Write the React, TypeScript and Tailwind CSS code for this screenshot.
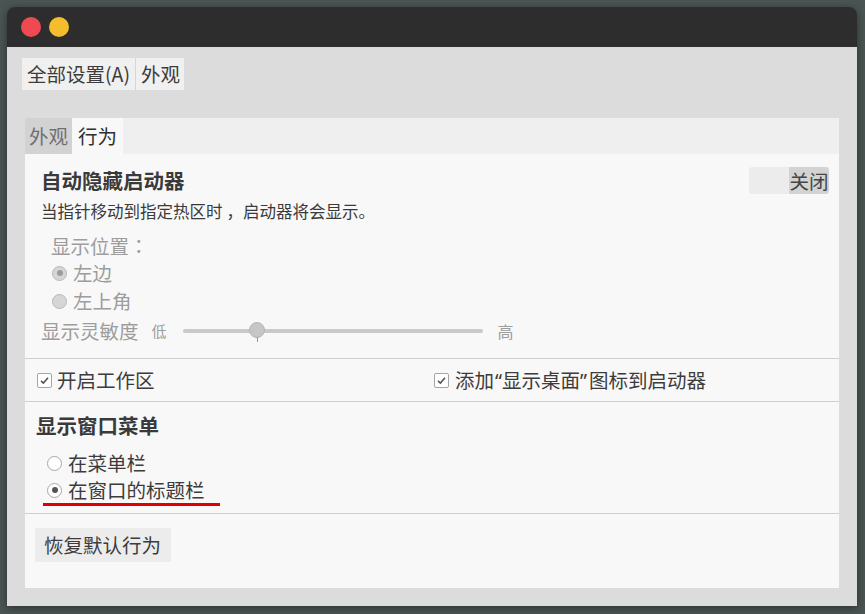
import React from "react";

const font = { fontFamily: '"Noto Sans CJK SC", "Noto Sans", sans-serif' };
const tcPunct = { fontFamily: '"Noto Sans CJK TC", sans-serif' };
const latin = { fontFamily: '"Noto Sans", sans-serif' };

function Radio({ checked, disabled }: { checked?: boolean; disabled?: boolean }) {
  return (
    <span
      className={
        "flex h-[15px] w-[15px] shrink-0 items-center justify-center rounded-full border " +
        (disabled ? "border-[#b9b9b9] bg-[#d6d6d6]" : "border-[#a8a8a8] bg-white")
      }
    >
      {checked && (
        <span
          className={
            "h-[6px] w-[6px] rounded-full " + (disabled ? "bg-[#9d9d9d]" : "bg-[#555555]")
          }
        />
      )}
    </span>
  );
}

function Checkbox() {
  return (
    <span className="flex h-[15px] w-[15px] shrink-0 items-center justify-center rounded-[2px] border border-[#a5a5a5] bg-white">
      <svg width="11" height="11" viewBox="0 0 11 11">
        <path d="M2 5.8 L4.4 8 L9 2.8" fill="none" stroke="#555" strokeWidth="1.6" />
      </svg>
    </span>
  );
}

export default function App() {
  return (
    <div
      className="flex h-[614px] w-[865px] bg-[#4a5452] pb-[8px] pl-[7px] pr-[8px] pt-[7px] text-[19.5px] text-[#3c3c3c]"
      style={font}
    >
      <div className="flex flex-1 flex-col overflow-hidden rounded-t-[8px] shadow-[0_2px_8px_rgba(0,0,0,0.4)]">
        {/* title bar */}
        <div className="flex h-[40px] shrink-0 items-center gap-[8px] bg-[#2d2d2d] pl-[14px]">
          <span className="h-[20px] w-[20px] rounded-full bg-[#ef4a52]" />
          <span className="h-[20px] w-[20px] rounded-full bg-[#f5bd2c]" />
        </div>

        <div className="flex flex-1 flex-col bg-[#dcdcdc] pb-[18px]">
          {/* breadcrumb */}
          <div className="ml-[15px] mt-[11px] flex h-[32px]">
            <div className="flex w-[114px] items-center border-r border-[#d6d6d6] bg-[#f0f0f0] pl-[5px] leading-none">
              全部设置(A)
            </div>
            <div className="flex w-[48px] items-center bg-[#f0f0f0] pl-[5px] leading-none">外观</div>
          </div>

          {/* notebook */}
          <div className="mx-[18px] mt-[28px] flex flex-1 flex-col">
            <div className="flex h-[36px] bg-[#efefef]">
              <div className="flex w-[47px] items-center justify-center bg-[#d2d2d2] text-[#707070]">外观</div>
              <div className="flex w-[51px] items-center justify-center bg-[#f8f8f8] text-[#2f2f2f]">行为</div>
            </div>

            <div className="flex flex-1 flex-col bg-[#f8f8f8]">
              {/* section 1 */}
              <div className="flex flex-col pb-[13px] pl-[16px] pr-[10px] pt-[13px]">
                <div className="flex h-[27px] items-center justify-between">
                  <span className="text-[20.5px] font-bold text-[#3a3a3a]">自动隐藏启动器</span>
                  <div className="flex h-[27px] w-[80px] overflow-hidden rounded-[3px]">
                    <span className="flex-1 bg-[#ececec]" />
                    <span className="flex w-[40px] items-center justify-center bg-[#d3d3d3] text-[#454545]">
                      关闭
                    </span>
                  </div>
                </div>
                <div className="mt-[6px] flex h-[22px] items-center text-[16.5px] text-[#3a3a3a]">
                  当指针移动到指定热区时
                  <span className="pl-[4px]">，</span>
                  启动器将会显示。
                </div>
                <div className="ml-[10px] mt-[12px] flex h-[24px] items-center text-[#9d9d9d]">
                  显示位置
                  <span lang="zh-Hant" style={tcPunct}>：</span>
                </div>
                <div className="ml-[11px] mt-[1px] flex h-[28px] items-center gap-[6px] text-[#9d9d9d]">
                  <Radio checked disabled />
                  左边
                </div>
                <div className="ml-[11px] flex h-[28px] items-center gap-[6px] text-[#9d9d9d]">
                  <Radio disabled />
                  左上角
                </div>
                <div className="mt-[2px] flex h-[28px] items-center text-[#9d9d9d]">
                  <span>显示灵敏度</span>
                  <span className="ml-[13px] text-[15px]">低</span>
                  <div className="relative ml-[16px] flex h-[28px] w-[300px] items-center">
                    <div className="h-[4px] w-full rounded-full bg-[#c9c9c9]" />
                    <span className="absolute left-[66px] top-[5px] h-[16px] w-[16px] rounded-full border border-[#b5b5b5] bg-[#c6c6c6]" />
                    <span className="absolute left-[74px] top-[20px] h-[5px] w-[1px] bg-[#9a9a9a]" />
                  </div>
                  <span className="ml-[15px] text-[16px]">高</span>
                </div>
              </div>

              {/* section 2 */}
              <div className="flex h-[43px] items-center border-t border-[#cfcfcf] pl-[12px]">
                <div className="flex w-[397px] items-center gap-[5px]">
                  <Checkbox />
                  开启工作区
                </div>
                <div className="flex items-center gap-[6px]">
                  <Checkbox />
                  <span>
                    添加<span style={latin} className="pl-[1px]">“</span>显示桌面<span style={latin} className="pr-[2px]">”</span>图标到启动器
                  </span>
                </div>
              </div>

              {/* section 3 */}
              <div className="flex flex-col border-t border-[#cfcfcf] pb-[7px]">
                <div className="ml-[11px] mt-[9px] flex h-[28px] items-center text-[20.5px] font-bold text-[#3a3a3a]">
                  显示窗口菜单
                </div>
                <div className="ml-[22px] mt-[10px] flex h-[28px] items-center gap-[6px]">
                  <Radio />
                  在菜单栏
                </div>
                <div className="ml-[22px] flex h-[26px] items-center gap-[6px]">
                  <Radio checked />
                  在窗口的标题栏
                </div>
                <div className="ml-[18px] h-[3px] w-[177px] bg-[#e00000]" />
              </div>

              {/* section 4 */}
              <div className="flex flex-1 flex-col border-t border-[#cfcfcf] pl-[10px] pt-[14px]">
                <div className="flex h-[34px] w-[136px] items-center bg-[#ececec] pl-[9px]">恢复默认行为</div>
              </div>
            </div>
          </div>
        </div>
      </div>
    </div>
  );
}
